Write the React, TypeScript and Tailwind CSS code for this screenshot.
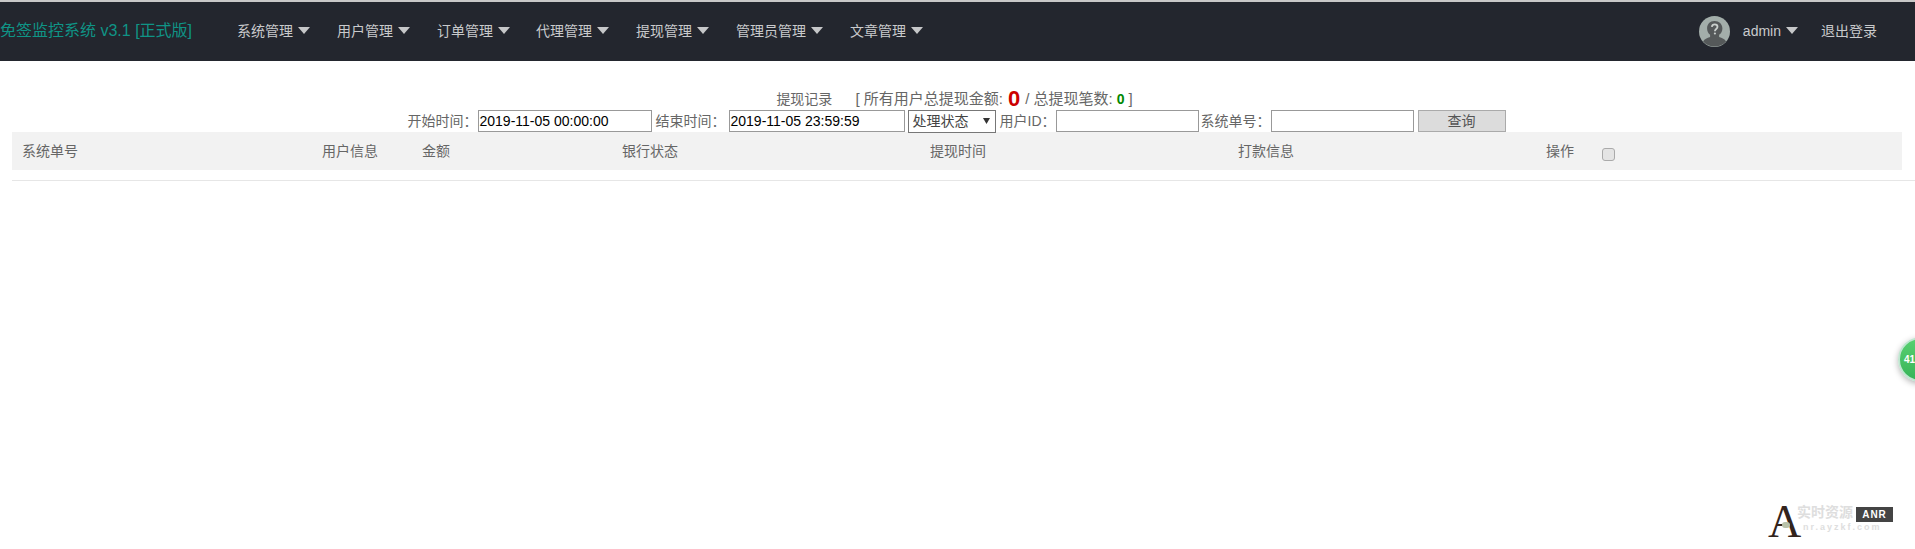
const font = { fontFamily: '"Liberation Sans", "Noto Sans CJK SC", sans-serif' };

const menus = [
  { label: '系统管理', width: 'w-[100px]' },
  { label: '用户管理', width: 'w-[100px]' },
  { label: '订单管理', width: 'w-[99px]' },
  { label: '代理管理', width: 'w-[100px]' },
  { label: '提现管理', width: 'w-[100px]' },
  { label: '管理员管理', width: 'w-[114px]' },
  { label: '文章管理', width: 'w-[90px]' },
];

const columns = [
  { label: '系统单号', width: 'w-[300px]' },
  { label: '用户信息', width: 'w-[100px]' },
  { label: '金额', width: 'w-[200px]' },
  { label: '银行状态', width: 'w-[308px]' },
  { label: '提现时间', width: 'w-[308px]' },
  { label: '打款信息', width: 'w-[308px]' },
  { label: '操作', width: 'w-[56px]' },
];

function Caret() {
  return (
    <svg width="12" height="7" viewBox="0 0 12 7" className="ml-[5px] shrink-0">
      <polygon points="0,0 12,0 6,7" fill="#c6c7c9" />
    </svg>
  );
}

function Avatar() {
  return (
    <svg width="31" height="31" viewBox="0 0 31 31" className="mt-[2px] shrink-0">
      <circle cx="15.5" cy="15.5" r="15.5" fill="#a3aeaa" />
      <path d="M15.5 5c-4.6 0-7.4 3.2-7.4 7.4 0 3 1.300 5 3 6.400v2.200c-3 1-5.600 2-7 4.400a15.500 15.500 0 0 0 23 0c-1.400-2.400-4-3.400-7-4.400v-2.200c2-1.400 3.300-3.400 3.300-6.400C23.400 8.200 20.100 5 15.500 5z" fill="#55595a" />
      <path d="M12.800 10.800c.3-1.600 1.300-2.400 2.900-2.400 1.700 0 2.800 1 2.800 2.400 0 2.200-2.600 2.200-2.600 4.400" fill="none" stroke="#c9cfcc" strokeWidth="1.800" />
      <circle cx="15.900" cy="17.500" r="1.100" fill="#c9cfcc" />
    </svg>
  );
}

function Nav() {
  return (
    <div className="flex h-[61px] items-center border-t-2 border-[#c8c8c8] bg-[#23262e] pb-[2px] text-sm text-[#c9cacc]">
      <div className="w-[237px] shrink-0 text-base text-[#0f9486]">免签监控系统 v3.1 [正式版]</div>
      {menus.map((m) => (
        <div key={m.label} className={`flex items-center ${m.width}`}>
          {m.label}
          <Caret />
        </div>
      ))}
      <div className="ml-auto flex items-center pr-[38px]">
        <Avatar />
        <span className="ml-[13px]">admin</span>
        <Caret />
        <span className="ml-[23px]">退出登录</span>
      </div>
    </div>
  );
}

function Field({ label, value, className }: { label: string; value?: string; className: string }) {
  return (
    <>
      <span>{label}</span>
      <div className={`flex h-[22px] items-center border border-[#999] bg-white pl-px text-sm text-black ${className}`}>{value}</div>
    </>
  );
}

function Filters() {
  return (
    <div className="flex h-[22px] items-center justify-center pr-[2px] text-sm text-[#666]">
      <Field label="开始时间：" value="2019-11-05 00:00:00" className="mr-[4px] w-[174px]" />
      <Field label="结束时间：" value="2019-11-05 23:59:59" className="ml-[3px] mr-[3px] w-[176px]" />
      <div className="mr-[4px] flex h-[23px] w-[88px] items-center justify-between border border-[#777] bg-white pl-[4px] pr-[5px] text-[#444]">
        处理状态
        <svg width="7" height="6" viewBox="0 0 7 6">
          <polygon points="0,0 7,0 3.500,6" fill="#333" />
        </svg>
      </div>
      <Field label="用户ID：" className="mr-[2px] w-[143px]" />
      <Field label="系统单号：" className="mr-[4px] w-[143px]" />
      <button className="h-[22px] w-[88px] border border-[#aaa] bg-[#dcdcdc] text-sm text-[#555]">查询</button>
    </div>
  );
}

function Watermark() {
  return (
    <div className="absolute left-[1768px] top-[503px] flex items-start">
      <div className="relative w-[29px] text-[46px] leading-[38px] text-[#33241c]" style={{ fontFamily: '"Liberation Serif", serif' }}>
        A
        <span className="absolute left-[14px] top-[19px] h-[6px] w-[8px] rounded-full bg-[#b9c2a8]" />
      </div>
      <div className="w-[59px] text-[#dedede]">
        <div className="text-sm leading-[18px] font-bold">实时资源</div>
        <div className="ml-[6px] text-[9px] leading-[12px] font-bold tracking-[2px] whitespace-nowrap">nr.ayzkf.com</div>
      </div>
      <div className="mt-[4px] flex h-[15px] w-[37px] items-center justify-center bg-[#444] text-[10px] font-bold tracking-[1px] text-white">ANR</div>
    </div>
  );
}

export default function App() {
  return (
    <div className="relative h-[549px] w-[1915px] overflow-hidden bg-white" style={font}>
      <Nav />
      <div className="mt-[27px] flex h-[22px] items-center justify-center pr-[6px] text-[15px] text-[#666]">
        <span className="mr-[23px] text-sm">提现记录</span>
        <span>[ 所有用户总提现金额:</span>
        <span className="mx-[5px] text-[22px] leading-none font-bold text-[#c00]">0</span>
        <span>/ 总提现笔数:</span>
        <span className="mx-1 text-sm font-bold text-[#080]">0</span>
        <span>]</span>
      </div>
      <Filters />
      <div className="ml-3 mr-[13px] flex h-[38px] items-center bg-[#f2f2f2] pl-[10px] text-sm text-[#666]">
        {columns.map((c) => (
          <div key={c.label} className={c.width}>{c.label}</div>
        ))}
        <div className="mt-[6px] h-[13px] w-[13px] rounded-[3px] border border-[#aaa] bg-[#e4e4e4]" />
      </div>
      <div className="ml-3 mt-[10px] border-t border-[#e6e6e6]" />
      <div className="absolute left-[1898px] top-[337px] flex h-[45px] w-[45px] items-center rounded-full border-2 border-[#bfe6d0] bg-gradient-to-b from-[#58d070] to-[#36b458] pl-[4px] text-[10px] font-bold text-white shadow-[0_2px_6px_rgba(0,0,0,0.3)]">
        41
      </div>
      <Watermark />
    </div>
  );
}
